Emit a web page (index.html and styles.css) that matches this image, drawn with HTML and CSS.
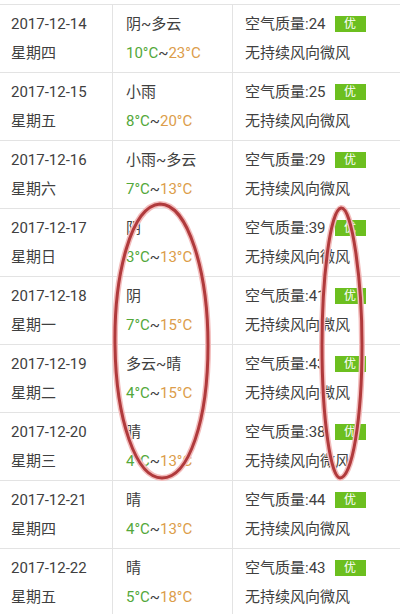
FILE: index.html
```html
<!DOCTYPE html>
<html lang="zh-CN">
<head>
  <meta charset="UTF-8">
  <title>天气预报</title>
  <link rel="stylesheet" href="styles.css">
</head>
<body>

<div class="board">

  <div class="row cut">
    <div class="cell"></div>
    <div class="cell"></div>
    <div class="cell"></div>
  </div>

  <div class="row">
    <div class="cell day"><span>2017-12-14</span><span>星期四</span></div>
    <div class="cell sky"><span>阴~多云</span><span><b class="lo">10°C</b>~<b class="hi">23°C</b></span></div>
    <div class="cell air"><span>空气质量:24<i class="tag">优</i></span><span>无持续风向微风</span></div>
  </div>

  <div class="row">
    <div class="cell day"><span>2017-12-15</span><span>星期五</span></div>
    <div class="cell sky"><span>小雨</span><span><b class="lo">8°C</b>~<b class="hi">20°C</b></span></div>
    <div class="cell air"><span>空气质量:25<i class="tag">优</i></span><span>无持续风向微风</span></div>
  </div>

  <div class="row">
    <div class="cell day"><span>2017-12-16</span><span>星期六</span></div>
    <div class="cell sky"><span>小雨~多云</span><span><b class="lo">7°C</b>~<b class="hi">13°C</b></span></div>
    <div class="cell air"><span>空气质量:29<i class="tag">优</i></span><span>无持续风向微风</span></div>
  </div>

  <div class="row">
    <div class="cell day"><span>2017-12-17</span><span>星期日</span></div>
    <div class="cell sky"><span>阴</span><span><b class="lo">3°C</b>~<b class="hi">13°C</b></span></div>
    <div class="cell air"><span>空气质量:39<i class="tag">优</i></span><span>无持续风向微风</span></div>
  </div>

  <div class="row">
    <div class="cell day"><span>2017-12-18</span><span>星期一</span></div>
    <div class="cell sky"><span>阴</span><span><b class="lo">7°C</b>~<b class="hi">15°C</b></span></div>
    <div class="cell air"><span>空气质量:41<i class="tag">优</i></span><span>无持续风向微风</span></div>
  </div>

  <div class="row">
    <div class="cell day"><span>2017-12-19</span><span>星期二</span></div>
    <div class="cell sky"><span>多云~晴</span><span><b class="lo">4°C</b>~<b class="hi">15°C</b></span></div>
    <div class="cell air"><span>空气质量:43<i class="tag">优</i></span><span>无持续风向微风</span></div>
  </div>

  <div class="row">
    <div class="cell day"><span>2017-12-20</span><span>星期三</span></div>
    <div class="cell sky"><span>晴</span><span><b class="lo">4°C</b>~<b class="hi">13°C</b></span></div>
    <div class="cell air"><span>空气质量:38<i class="tag">优</i></span><span>无持续风向微风</span></div>
  </div>

  <div class="row">
    <div class="cell day"><span>2017-12-21</span><span>星期四</span></div>
    <div class="cell sky"><span>晴</span><span><b class="lo">4°C</b>~<b class="hi">13°C</b></span></div>
    <div class="cell air"><span>空气质量:44<i class="tag">优</i></span><span>无持续风向微风</span></div>
  </div>

  <div class="row">
    <div class="cell day"><span>2017-12-22</span><span>星期五</span></div>
    <div class="cell sky"><span>晴</span><span><b class="lo">5°C</b>~<b class="hi">18°C</b></span></div>
    <div class="cell air"><span>空气质量:43<i class="tag">优</i></span><span>无持续风向微风</span></div>
  </div>

  <!-- hand-drawn marks over the table -->
  <svg class="marks" width="400" height="614" viewBox="0 0 400 614">
    <g fill="none" stroke-linejoin="round">
      <path class="halo" d="M160,204 C131,206 114,275 115,345 C116,420 136,478 162,478 C189,478 208,420 208,345 C208,272 188,204 160,204 Z"/>
      <path class="ink" d="M160,204 C131,206 114,275 115,345 C116,420 136,478 162,478 C189,478 208,420 208,345 C208,272 188,204 160,204 Z"/>
      <path class="halo" d="M341,208 C330,210 322,280 322,345 C322,420 331,478 340,478 C352,478 362,420 362,345 C362,280 352,206 341,208 Z"/>
      <path class="ink" d="M341,208 C330,210 322,280 322,345 C322,420 331,478 340,478 C352,478 362,420 362,345 C362,280 352,206 341,208 Z"/>
    </g>
  </svg>

</div>

</body>
</html>
```

FILE: styles.css
```css
body {
  margin: 0;
  background-color: #fff;
  font-family: Roboto, "Noto Sans CJK SC", sans-serif;
  font-size: 15px;
  color: #404040;
}
.board {
  position: relative;
  width: 400px;
  height: 614px;
  overflow: hidden;
}
.row {
  display: grid;
  grid-template-columns: 113px 120px 1fr;
  border-bottom: 1px solid #e3e3e3;
}
.cell {
  display: flex;
  flex-direction: column;
  padding: 5px 0 4px 0;
  line-height: 29px;
  height: 58px;
}
.cut .cell {
  height: 4px;
  padding: 0;
}
.day,
.sky {
  border-right: 1px solid #e3e3e3;
}
.day {
  padding-left: 11px;
}
.sky {
  padding-left: 13px;
}
.air {
  padding-left: 12px;
}
.cell b {
  font-weight: normal;
}
.lo {
  color: #53a83a;
}
.hi {
  color: #dc9d4a;
}
.tag {
  display: inline-block;
  font-style: normal;
  width: 31px;
  height: 16px;
  line-height: 16px;
  margin-left: 9px;
  text-align: center;
  font-size: 12px;
  color: #fff;
  background-color: #6cbf1f;
  vertical-align: 1px;
}
.marks {
  position: absolute;
  left: 0;
  top: 0;
}
.halo {
  stroke: #f3bcbc;
  stroke-width: 6;
}
.ink {
  stroke: #b03a3c;
  stroke-width: 3;
}
```
